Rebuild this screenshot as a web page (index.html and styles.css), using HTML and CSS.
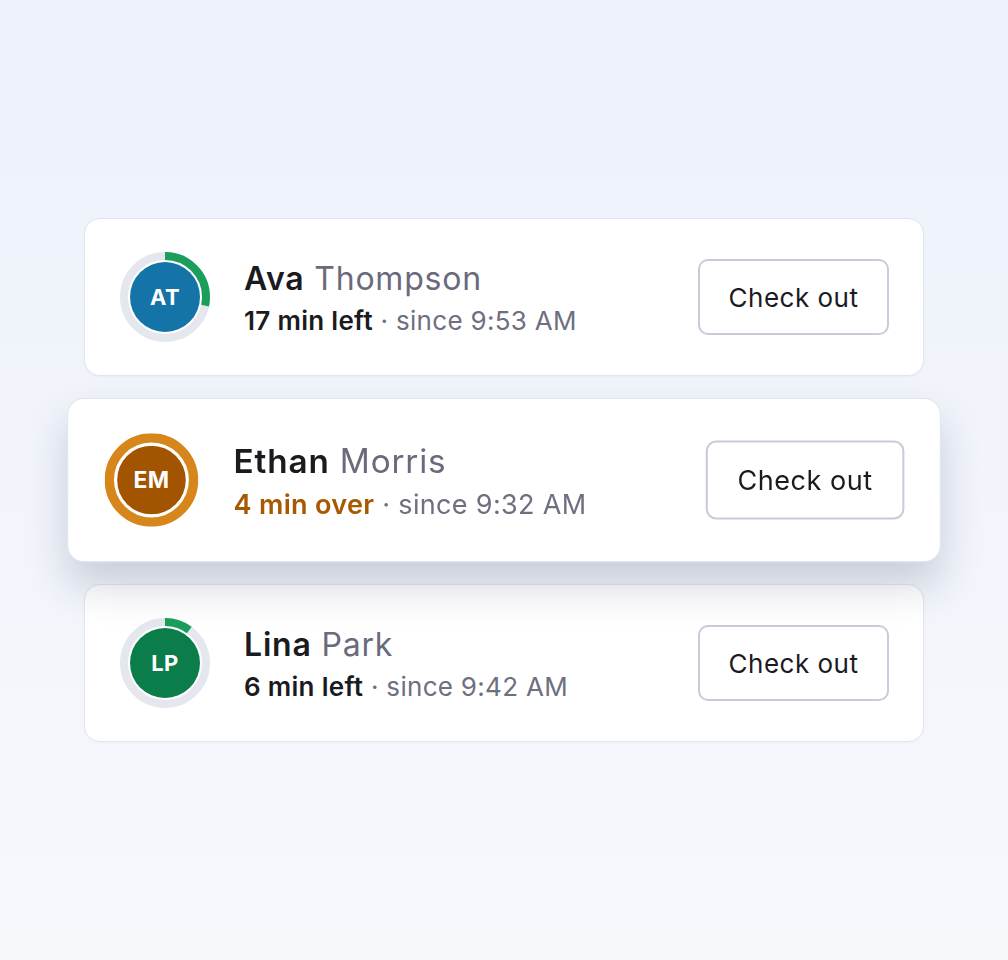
FILE: index.html
```html
<!DOCTYPE html>
<html lang="en">
<head>
  <meta charset="UTF-8" />
  <meta name="viewport" content="width=device-width, initial-scale=1.0" />
  <title>Check-in queue</title>
  <link rel="stylesheet" href="styles.css">
</head>
<body>
  <main class="queue">

    <div class="visit">
      <div class="avatar">
        <svg class="ring" viewBox="0 0 90 90">
          <circle class="track" cx="45" cy="45" r="41" />
          <circle class="progress" cx="45" cy="45" r="41" stroke-dasharray="73 258" />
        </svg>
        <span class="face blue">AT</span>
      </div>
      <div class="info">
        <div class="name"><strong>Ava</strong> Thompson</div>
        <div class="meta"><strong>17 min left</strong> · since 9:53 AM</div>
      </div>
      <button class="checkout">Check out</button>
    </div>

    <div class="visit overdue">
      <div class="avatar">
        <svg class="ring" viewBox="0 0 90 90">
          <circle class="over-ring" cx="45" cy="45" r="40.5" />
        </svg>
        <span class="face brown">EM</span>
      </div>
      <div class="info">
        <div class="name"><strong>Ethan</strong> Morris</div>
        <div class="meta"><strong class="late">4 min over</strong> · since 9:32 AM</div>
      </div>
      <button class="checkout">Check out</button>
    </div>

    <div class="visit">
      <div class="avatar">
        <svg class="ring" viewBox="0 0 90 90">
          <circle class="track" cx="45" cy="45" r="41" />
          <circle class="progress" cx="45" cy="45" r="41" stroke-dasharray="26 258" />
        </svg>
        <span class="face green">LP</span>
      </div>
      <div class="info">
        <div class="name"><strong>Lina</strong> Park</div>
        <div class="meta"><strong>6 min left</strong> · since 9:42 AM</div>
      </div>
      <button class="checkout">Check out</button>
    </div>

  </main>
</body>
</html>
```

FILE: styles.css
```css
body {
  margin: 0;
  min-height: 100vh;
  display: flex;
  align-items: center;
  justify-content: center;
  background: linear-gradient(180deg, #edf1fa 0%, #f6f8fc 100%);
  font-family: Inter, "Noto Sans", sans-serif;
  color: #1b1b1f;
}
.queue {
  width: 840px;
  display: flex;
  flex-direction: column;
  gap: 25px;
}
.visit {
  position: relative;
  display: flex;
  align-items: center;
  padding: 33px 34px 33px 35px;
  background: #fff;
  border: 1px solid #e2e5ed;
  border-radius: 16px;
  box-shadow: 0 1px 3px rgba(30, 40, 70, 0.04);
}
.visit.overdue {
  z-index: 1;
  transform: scale(1.04);
  box-shadow: 0 22px 40px rgba(40, 50, 85, 0.2);
}
.avatar {
  position: relative;
  width: 90px;
  height: 90px;
  flex: none;
}
.ring {
  width: 90px;
  height: 90px;
  display: block;
  transform: rotate(-90deg);
}
.track {
  fill: none;
  stroke: #e4e7ee;
  stroke-width: 8;
}
.progress {
  fill: none;
  stroke: #1b9d5b;
  stroke-width: 8;
}
.over-ring {
  fill: none;
  stroke: #d6861a;
  stroke-width: 9;
}
.face {
  position: absolute;
  left: 10px;
  top: 10px;
  width: 70px;
  height: 70px;
  border-radius: 50%;
  display: flex;
  align-items: center;
  justify-content: center;
  color: #fff;
  font-family: Inter, sans-serif;
  font-weight: 700;
  font-size: 22px;
  letter-spacing: 0.3px;
}
.overdue .face {
  left: 12px;
  top: 12px;
  width: 66px;
  height: 66px;
}
.blue { background: #1474a8; }
.brown { background: #a35400; }
.green { background: #0a7d4a; }
.info {
  flex: 1;
  margin-left: 34px;
  padding-top: 4px;
}
.name {
  font-size: 32px;
  line-height: 38px;
  color: #6a6a7c;
  letter-spacing: 0.8px;
}
.name strong {
  color: #1b1b1f;
  font-weight: 600;
}
.meta {
  margin-top: 6px;
  font-size: 26px;
  line-height: 34px;
  color: #6e6f80;
  letter-spacing: 0.3px;
}
.meta strong {
  color: #1b1b1f;
  font-weight: 600;
}
.meta .late {
  color: #a65a00;
}
.checkout {
  width: 191px;
  height: 76px;
  background: #fff;
  border: 2px solid #c9cbd9;
  border-radius: 10px;
  font-family: Inter, "Noto Sans", sans-serif;
  font-size: 26px;
  color: #1b1b1f;
  letter-spacing: 0.5px;
}
```
